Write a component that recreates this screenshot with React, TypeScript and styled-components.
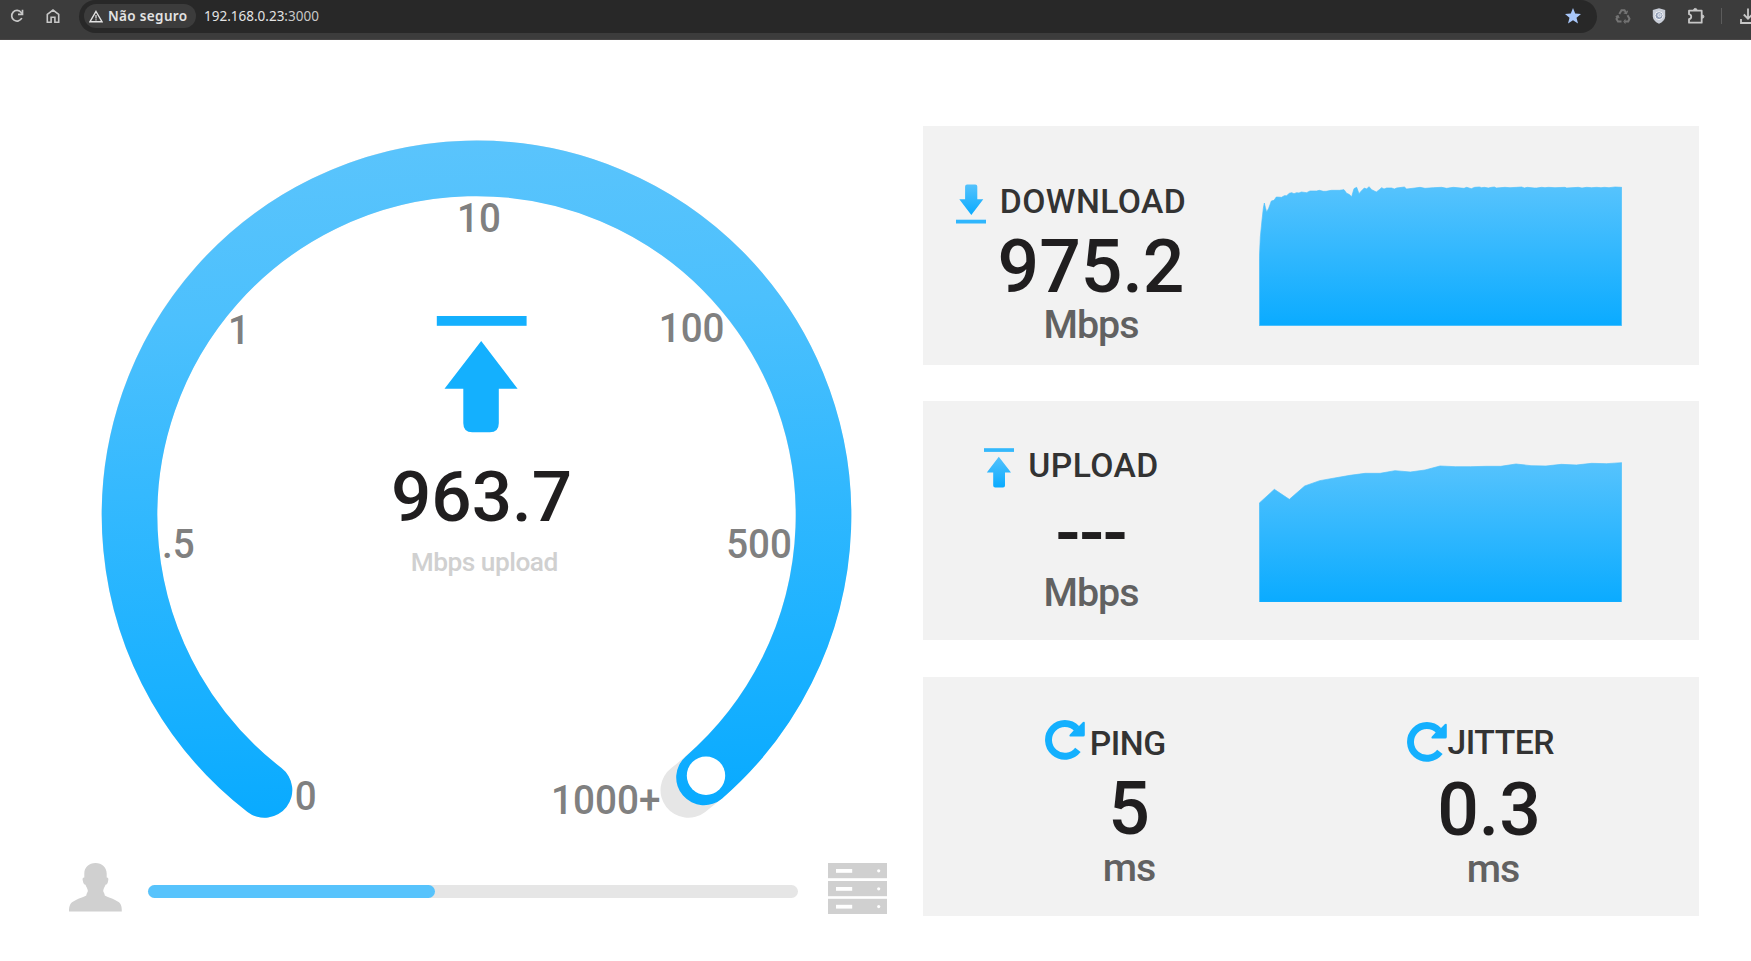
import React from "react";
import styled, { createGlobalStyle } from "styled-components";

const BLUE = "#14b0fe";
const LIGHT = "#57c3fc";

const GlobalStyle = createGlobalStyle`
  * { box-sizing: border-box; }
  body { margin: 0; background: #fff; font-family: Roboto, sans-serif; overflow: hidden; }
  svg { display: block; flex: none; }
`;

const Page = styled.div`
  width: 1751px;
  height: 961px;
  overflow: hidden;
  background: #fff;
`;

const Toolbar = styled.header`
  display: flex;
  height: 40px;
  padding-left: 9px;
  background: #3c3c3c;
  border-bottom: 1px solid #494747;
`;

const ToolbarIcon = styled.span<{ $w: number; $gap?: number }>`
  display: flex;
  align-items: center;
  width: ${(p) => p.$w}px;
  height: 32px;
  margin-right: ${(p) => p.$gap ?? 0}px;
  flex: none;
`;

const AddressBar = styled.div`
  display: flex;
  align-items: center;
  width: 1518px;
  height: 33px;
  padding: 0 15px 1px 5px;
  margin-right: 18px;
  border-radius: 17px;
  background: #282828;
  flex: none;
`;

const SecurityChip = styled.div`
  display: flex;
  align-items: center;
  gap: 5px;
  width: 112px;
  height: 24px;
  padding-left: 5px;
  border-radius: 12px;
  background: #3c3c3c;
  color: #e3e3e3;
  font: 600 13.5px/24px "Noto Sans", sans-serif;
  letter-spacing: 0.35px;
  white-space: nowrap;
`;

const Url = styled.div`
  flex: 1;
  margin-left: 8px;
  color: #e3e3e3;
  font: 400 13.5px/24px "Noto Sans", sans-serif;
`;

const Port = styled.span`
  color: #c7c7c7;
`;

const Divider = styled.span`
  width: 1.5px;
  height: 16px;
  margin: 8px 18px 0 0;
  background: #5c5c5c;
  flex: none;
`;

const Main = styled.main`
  display: flex;
  height: 921px;
`;

const GaugePane = styled.section`
  width: 923px;
  flex: none;
`;

const ProgressRow = styled.div`
  display: flex;
  align-items: flex-start;
  padding: 23px 0 0 69px;
`;

const Track = styled.div`
  width: 650px;
  height: 13px;
  margin: 22px 30px 0 26px;
  border-radius: 7px;
  background: #e6e6e6;
  flex: none;
`;

const Fill = styled.div`
  height: 100%;
  border-radius: 7px;
  background: ${LIGHT};
`;

const Cards = styled.section`
  width: 776px;
  padding-top: 86px;
  flex: none;
`;

const Card = styled.article<{ $gap?: number }>`
  display: flex;
  height: 239px;
  margin-bottom: ${(p) => p.$gap ?? 0}px;
  background: #f2f2f2;
`;

const Metric = styled.div<{ $width: number; $top: number }>`
  display: flex;
  flex-direction: column;
  align-items: center;
  width: ${(p) => p.$width}px;
  padding-top: ${(p) => p.$top}px;
  flex: none;
`;

const Heading = styled.div<{ $gap: number; $shift: number }>`
  display: flex;
  align-items: flex-start;
  gap: ${(p) => p.$gap}px;
  height: 40px;
  padding-right: ${(p) => p.$shift}px;
`;

const IconBox = styled.span<{ $top: number }>`
  height: 40px;
  margin-top: ${(p) => p.$top}px;
`;

const Label = styled.h2<{ $spacing: number }>`
  margin: 0;
  color: #333;
  font-size: 33.7px;
  font-weight: 500;
  line-height: 40px;
  letter-spacing: ${(p) => p.$spacing}px;
`;

const Value = styled.strong<{ $top: number; $shift?: number; $spacing?: number }>`
  margin-top: ${(p) => p.$top}px;
  padding-right: ${(p) => p.$shift ?? 0}px;
  color: #201e1f;
  font-size: 73.3px;
  font-weight: 500;
  line-height: 70px;
  letter-spacing: ${(p) => p.$spacing ?? 0}px;
`;

const Unit = styled.span<{ $top: number }>`
  margin-top: ${(p) => p.$top}px;
  color: #616161;
  font-size: 39.4px;
  font-weight: 500;
  line-height: 46px;
  letter-spacing: -1px;
`;

const ChartBox = styled.div<{ $top: number }>`
  padding-top: ${(p) => p.$top}px;
`;

const DOWNLOAD_POINTS =
  "58,295 61,230 66,180 70,145 73,129 76,142 80,156 86,145 94,123 102,121 109,111 125,112 133,107 140,107 148,100 155,98 162,101 170,98 177,99 184,96 200,98 210,93 230,93 238,91 250,94 258,94 274,91 298,91 312,89 320,100 327,103 335,110 342,86 350,82 357,101 364,93 373,84 380,87 387,80 395,89 409,96 418,89 425,83 432,87 440,84 455,84 463,87 470,84 493,81 500,87 525,84 540,82 555,85 580,83 605,82 620,85 640,82 672,85 680,82 694,86 704,82 718,81 725,83 733,82 745,84 755,82 763,81 769,84 795,82 810,83 830,82 845,81 853,84 862,82 883,84 890,84 905,82 915,83 925,82 945,83 975,82 980,84 1015,82 1026,84 1040,82 1055,83 1070,82 1083,83 1093,82 1107,83 1125,81 1145,82";

const UPLOAD_POINTS =
  "58,218 103,177 148,207 194,167 239,151 284,143 330,135 375,129 420,129 465,121 511,125 555,119 600,107 646,109 692,109 737,108 782,108 828,101 873,106 918,107 964,102 1009,104 1055,99 1100,100 1145,97";

function Chart({ id, points, top, bottom }: { id: string; points: string; top: number; bottom: number }) {
  return (
    <svg width="363" height={(bottom - top) / 3} viewBox={`57 ${top} 1089 ${bottom - top}`}>
      <defs>
        <linearGradient id={id} x1="0" y1="0" x2="0" y2="1">
          <stop offset="0" stopColor="#56c3fd" />
          <stop offset="1" stopColor="#0aabff" />
        </linearGradient>
      </defs>
      <polygon
        points={`${points} 1145,${bottom - 1} 58,${bottom - 1}`}
        fill={`url(#${id})`}
        stroke="#4fbffb"
        strokeWidth="2"
      />
    </svg>
  );
}

function TransferIcon({ up }: { up?: boolean }) {
  const id = up ? "iconUp" : "iconDown";
  return (
    <svg width="30" height="40" viewBox="0 0 30 40">
      <defs>
        <linearGradient id={id} x1="0" y1="0" x2="0" y2="1">
          <stop offset="0" stopColor="#54c2fc" />
          <stop offset="1" stopColor="#0aabff" />
        </linearGradient>
      </defs>
      {up ? (
        <>
          <rect x="0" y="0.2" width="30" height="3.7" fill="#34b8fc" />
          <path
            d="M14.8 8.8 27 24.5h-6V37.4q0 2-2 2h-7.8q-2 0-2-2V24.5H2.8Z"
            fill={`url(#${id})`}
          />
        </>
      ) : (
        <>
          <path
            d="M15.3 31 3.3 15.2h5.8V2.4q0-2 2-2h8.2q2 0 2 2v12.8h6Z"
            fill={`url(#${id})`}
          />
          <rect x="0" y="35.7" width="30" height="3.8" fill="#2fb6fd" />
        </>
      )}
    </svg>
  );
}

function RefreshIcon() {
  return (
    <svg width="40" height="40" viewBox="0 0 40 40">
      <path
        d="M32.9 29.9A16.4 16.4 0 1 1 31.8 8.6"
        fill="none"
        stroke={BLUE}
        strokeWidth="6.9"
      />
      <path d="M38 2q1.800-1 1.800 1V15q0 1.600-1.600 1.600H25.800q-2.200-.3-.9-2.200L28.600 10.500 32.500 7.400Z" fill={BLUE} />
    </svg>
  );
}

const TICKS: [string, number, number, number][] = [
  ["0", 305.6, 809.5, 21.9],
  [".5", 178.3, 557.5, 32.7],
  ["1", 239, 344, 21.9],
  ["10", 478.9, 231.7, 43.8],
  ["100", 691.6, 341.7, 65.7],
  ["500", 759, 558, 65.7],
  ["1000+", 605.8, 814, 109.5],
];

function Gauge() {
  return (
    <svg width="923" height="800" viewBox="0 40 923 800">
      <defs>
        <linearGradient id="dial" gradientUnits="userSpaceOnUse" x1="460" y1="141" x2="490" y2="818">
          <stop offset="0" stopColor="#5ac4fc" />
          <stop offset="0.25" stopColor="#4cc0fd" />
          <stop offset="0.75" stopColor="#1db2ff" />
          <stop offset="1" stopColor="#08aaff" />
        </linearGradient>
      </defs>
      <g fill="none" strokeWidth="55.6" strokeLinecap="round">
        <path d="M264.5 790A347 347 0 1 1 688.3 790" stroke="#e6e6e6" />
        <path d="M264.5 790A347 347 0 1 1 704 777.4" stroke="url(#dial)" />
      </g>
      <circle cx="706" cy="775.7" r="19.2" fill="#fff" />
      <g fill={BLUE}>
        <rect x="436.8" y="316" width="89.8" height="9.8" />
        <path d="M481.2 341 517.6 388.8H498.8V423.2q0 9-9 9H472.3q-9 0-9-9V388.8H444.5Z" />
      </g>
      <g fontFamily="Roboto, sans-serif" fontWeight="500" textAnchor="middle">
        <g fill="#808080" fontSize="41.5">
          {TICKS.map(([label, x, y, length]) => (
            <text key={label} x={x} y={y} textLength={length} lengthAdjust="spacingAndGlyphs">
              {label}
            </text>
          ))}
        </g>
        <text x="481.5" y="521" fontSize="71" fill="#201e1f">
          963.7
        </text>
        <text x="484.3" y="571" fontSize="26.3" letterSpacing="-0.5" fill="#d0d0d0">
          Mbps upload
        </text>
      </g>
    </svg>
  );
}

function UserIcon() {
  return (
    <svg width="53" height="49" viewBox="0 0 53 49" fill="#d0d0d0">
      <path d="M26.5 0C33 0 37.6 4.500 37.700 10.500V14.500C39.500 14.500 39.700 16 39 18.500 38.500 20.700 38 21.500 36.500 21.800 35.900 24 34.500 25 34.200 28 34.500 29.500 35.600 30 35.800 32.500 39 34.500 42.500 35 46.500 37.200 51.500 39.500 53 42 52.800 48.500H0C0 42 1.500 39.500 6.500 37.200 10.500 35 14 34.500 17.300 32.500 17.500 30 18.500 29.500 18.900 28 18.500 25 17.100 24 16.500 21.800 15 21.500 14.500 20.700 14 18.500 13.200 16 13.400 14.500 15.300 14.500V10.500C15.300 4.500 20 0 26.500 0Z" />
    </svg>
  );
}

function ServerIcon() {
  return (
    <svg width="59" height="51" viewBox="0 0 59 51">
      {[0, 18, 35.8].map((y) => (
        <g key={y}>
          <rect x="0" y={y} width="59" height="15.2" fill="#d0d0d0" />
          <rect x="8" y={y + 6} width="16.2" height="3.8" fill="#fff" />
          <circle cx="50.7" cy={y + 7.8} r="1.6" fill="#fff" />
        </g>
      ))}
    </svg>
  );
}

function BrowserBar() {
  return (
    <Toolbar>
      <ToolbarIcon $w={16} $gap={20}>
        <svg width="16" height="16" viewBox="0 0 16 16" fill="none" stroke="#c7c7c7" strokeWidth="1.7">
          <path d="M12.800 10A5.300 5.300 0 1 1 12.200 4.500L13.400 6" />
          <path d="M13.500 1.800V6.300H9" />
        </svg>
      </ToolbarIcon>
      <ToolbarIcon $w={16} $gap={18}>
        <svg width="16" height="16" viewBox="0 0 16 16" fill="none" stroke="#c7c7c7" strokeWidth="1.6">
          <path d="M2.300 14.200V6.400L8 2l5.700 4.400v7.800H9.900V9.300H6.100v4.900Z" />
        </svg>
      </ToolbarIcon>
      <AddressBar>
        <SecurityChip>
          <svg width="14" height="13" viewBox="0 0 14 13" fill="none" stroke="#e3e3e3" strokeWidth="1.4">
            <path d="M7 1.500 13 11.700H1Z" />
            <path d="M7 5v3.500M7 9.300v1.300" strokeWidth="1.2" />
          </svg>
          Não seguro
        </SecurityChip>
        <Url>
          192.168.0.23<Port>:3000</Port>
        </Url>
        <svg width="18" height="18" viewBox="0 0 18 18" fill="#a8c7fa">
          <path d="m9 1 2.200 5.500 5.800.4-4.500 3.800 1.500 5.800L9 13.300l-5 3.200 1.500-5.800L1 6.900l5.800-.4Z" />
        </svg>
      </AddressBar>
      <ToolbarIcon $w={16} $gap={21}>
        <svg width="16" height="16" viewBox="0 0 16 16" fill="none" stroke="#747474" strokeWidth="2">
          <path d="m4.300 6 2.200-3.700h3L11.300 5M12.500 7.300l2 3.500-1.300 2.700H9.700M6.500 13.500H3L1.500 10.900l1.500-3" />
          <path d="M12.500 2.800 11.500 5.500 8.700 5M10.500 11.500l-1.500 2 1.500 2M.7 8.600l2.400-.9 1 2.500" strokeWidth="1.2" />
        </svg>
      </ToolbarIcon>
      <ToolbarIcon $w={14} $gap={20.5}>
        <svg width="14" height="16" viewBox="0 0 14 16">
          <path d="M7 .3 13.200 2v6.500C13 12 10.500 14.200 7 15.800 3.500 14.200 1 12 .8 8.500V2Z" fill="#c9ced8" />
          <circle cx="7" cy="7.6" r="4" fill="#8f9cb5" stroke="#f4f5f7" />
          <circle cx="7.5" cy="7.2" r="1.7" fill="#b9c3d6" stroke="#f4f5f7" strokeWidth=".8" />
        </svg>
      </ToolbarIcon>
      <ToolbarIcon $w={18} $gap={16}>
        <svg width="18" height="18" viewBox="0 0 18 18" fill="none" stroke="#c7c7c7" strokeWidth="1.8">
          <path d="M2 3.700h12.700v12H2v-3.500c3-.7 3-4.300 0-5Z" strokeLinejoin="round" />
          <path d="M6.700 3a1.600 1.600 0 0 1 3.200 0ZM15.300 8a1.600 1.600 0 0 1 0 3.200Z" fill="#c7c7c7" strokeWidth="1" />
        </svg>
      </ToolbarIcon>
      <Divider />
      <ToolbarIcon $w={16}>
        <svg width="16" height="18" viewBox="0 0 16 18" fill="none" stroke="#c7c7c7" strokeWidth="1.8">
          <path d="M8 1.500v10M3.800 7.500 8 11.700l4.200-4.200M1 12v4h14v-4" />
        </svg>
      </ToolbarIcon>
    </Toolbar>
  );
}

export default function App() {
  return (
    <Page>
      <GlobalStyle />
      <BrowserBar />
      <Main>
        <GaugePane>
          <Gauge />
          <ProgressRow>
            <UserIcon />
            <Track>
              <Fill style={{ width: "44.2%" }} />
            </Track>
            <ServerIcon />
          </ProgressRow>
        </GaugePane>
        <Cards>
          <Card $gap={35.5}>
            <Metric $width={336} $top={55.5}>
              <Heading $gap={14} $shift={40}>
                <IconBox $top={2.5}>
                  <TransferIcon />
                </IconBox>
                <Label $spacing={0.4}>DOWNLOAD</Label>
              </Heading>
              <Value $top={10.5}>975.2</Value>
              <Unit $top={0}>Mbps</Unit>
            </Metric>
            <ChartBox $top={60}>
              <Chart id="down" points={DOWNLOAD_POINTS} top={78} bottom={498} />
            </ChartBox>
          </Card>
          <Card $gap={37.5}>
            <Metric $width={336} $top={45}>
              <Heading $gap={14} $shift={39}>
                <IconBox $top={2.5}>
                  <TransferIcon up />
                </IconBox>
                <Label $spacing={0.4}>UPLOAD</Label>
              </Heading>
              <Value $top={12} $spacing={-1.2}>---</Value>
              <Unit $top={2}>Mbps</Unit>
            </Metric>
            <ChartBox $top={61.2}>
              <Chart id="up" points={UPLOAD_POINTS} top={95} bottom={517} />
            </ChartBox>
          </Card>
          <Card>
            <Metric $width={412} $top={46.5}>
              <Heading $gap={4.5} $shift={47}>
                <IconBox $top={-3.5}>
                  <RefreshIcon />
                </IconBox>
                <Label $spacing={-0.5}>PING</Label>
              </Heading>
              <Value $top={10}>5</Value>
              <Unit $top={1}>ms</Unit>
            </Metric>
            <Metric $width={316} $top={45.5}>
              <Heading $gap={0.5} $shift={25}>
                <IconBox $top={-0.5}>
                  <RefreshIcon />
                </IconBox>
                <Label $spacing={-0.5}>JITTER</Label>
              </Heading>
              <Value $top={12} $shift={8}>0.3</Value>
              <Unit $top={1}>ms</Unit>
            </Metric>
          </Card>
        </Cards>
      </Main>
    </Page>
  );
}
